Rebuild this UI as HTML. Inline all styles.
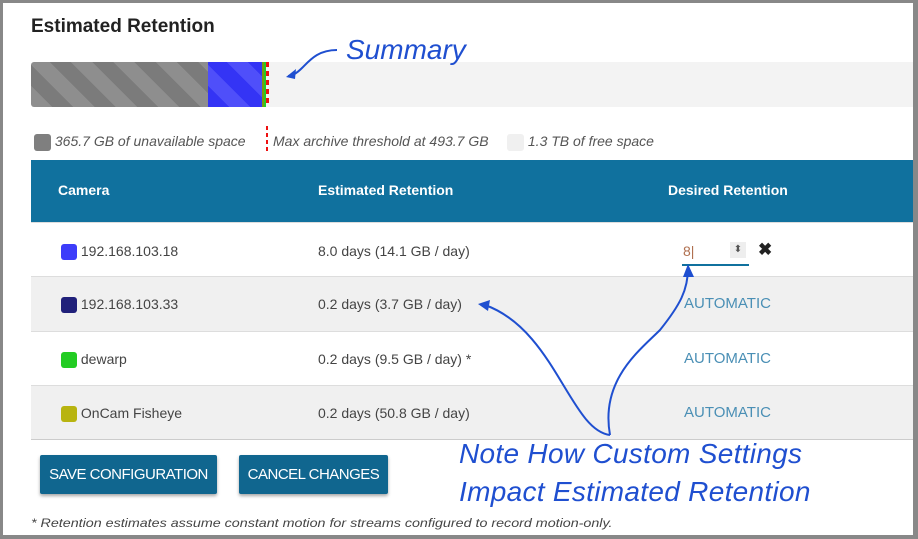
<!DOCTYPE html>
<html><head><style>
body{margin:0;width:918px;height:539px;background:#888;position:relative;overflow:hidden;font-family:"Liberation Sans",sans-serif;}
.page{position:absolute;left:3px;top:3px;width:910px;height:532px;background:#fff;}
.a{position:absolute;}
.title{left:31px;top:16px;font-size:19px;font-weight:bold;color:#222;}
.bar{left:31px;top:62px;width:882px;height:45px;background:#f3f3f3;border-radius:3px 0 0 3px;overflow:hidden;}
.leg{top:133px;font-size:14px;font-style:italic;color:#555;}
.sw{display:inline-block;width:17px;height:17px;border-radius:3px;vertical-align:middle;}
.hdr{left:31px;top:160px;width:882px;height:62px;background:#10719e;color:#fff;font-weight:bold;font-size:14px;}
.row{left:31px;width:882px;border-top:1px solid #ddd;font-size:14px;color:#444;}
.auto{color:#4a8fb5;font-size:15px;}
.btn{top:455px;height:39px;background:#10668f;color:#fff;font-size:15px;line-height:39px;text-align:center;border-radius:2px;box-shadow:0 2px 3px rgba(0,0,0,.35);letter-spacing:-0.5px}
.note{color:#1f4fd0;font-size:28px;font-style:italic;font-family:"Liberation Sans",sans-serif;}
</style></head><body>
<div class="page"></div>
<div class="a title">Estimated Retention</div>
<div class="a bar">
<div class="a" style="left:0;top:0;width:177px;height:45px;background:repeating-linear-gradient(45deg,#8e8e8e 0 15px,#7b7b7b 15px 30px)"></div>
<div class="a" style="left:177px;top:0;width:54px;height:45px;background:repeating-linear-gradient(45deg,#3434f5 0 15px,#4f4ffa 15px 30px)"></div>
<div class="a" style="left:231px;top:0;width:2px;height:45px;background:#7a9a10"></div>
<div class="a" style="left:233px;top:0;width:2px;height:45px;background:#2c2"></div>
<div class="a" style="left:235px;top:0;width:3px;height:45px;background:repeating-linear-gradient(#e11 0 5px,transparent 5px 9px)"></div>
</div>
<div class="a leg" style="left:34px"><span class="sw" style="background:#7f7f7f"></span> 365.7 GB of unavailable space</div>
<div class="a" style="left:266px;top:126px;width:2px;height:26px;background:repeating-linear-gradient(#e11 0 4px,transparent 4px 7px)"></div>
<div class="a leg" style="left:273px">Max archive threshold at 493.7 GB</div>
<div class="a leg" style="left:507px"><span class="sw" style="background:#f0f0f0"></span> 1.3 TB of free space</div>
<div class="a hdr"><span class="a" style="left:27px;top:22px">Camera</span><span class="a" style="left:287px;top:22px">Estimated Retention</span><span class="a" style="left:637px;top:22px">Desired Retention</span></div>
<div class="a row" style="top:222px;height:54px;background:#fff">
<span class="a" style="left:30px;top:20px"><span class="sw" style="background:#3d3dfa;width:16px;height:16px"></span> 192.168.103.18</span>
<span class="a" style="left:287px;top:20px">8.0 days (14.1 GB / day)</span>
<span class="a" style="left:652px;top:20px;color:#b07050">8|</span>
<div class="a" style="left:699px;top:19px;width:16px;height:16px;background:#eee;font-size:10px;text-align:center;color:#555;line-height:16px">⬍</div>
<div class="a" style="left:651px;top:41px;width:67px;height:2px;background:#10719e"></div>
<span class="a" style="left:727px;top:17px;font-size:17px;font-weight:bold;color:#222">✖</span>
</div>
<div class="a row" style="top:276px;height:54px;background:#f0f0f0">
<span class="a" style="left:30px;top:19px"><span class="sw" style="background:#20207a;width:16px;height:16px"></span> 192.168.103.33</span>
<span class="a" style="left:287px;top:19px">0.2 days (3.7 GB / day)</span>
<span class="a auto" style="left:653px;top:18px">AUTOMATIC</span></div>
<div class="a row" style="top:331px;height:54px;background:#fff">
<span class="a" style="left:30px;top:19px"><span class="sw" style="background:#2c2;width:16px;height:16px"></span> dewarp</span>
<span class="a" style="left:287px;top:19px">0.2 days (9.5 GB / day) *</span>
<span class="a auto" style="left:653px;top:18px">AUTOMATIC</span></div>
<div class="a row" style="top:385px;height:53px;background:#f0f0f0;border-bottom:1px solid #ccc">
<span class="a" style="left:30px;top:19px"><span class="sw" style="background:#b8b410;width:16px;height:16px"></span> OnCam Fisheye</span>
<span class="a" style="left:287px;top:19px">0.2 days (50.8 GB / day)</span>
<span class="a auto" style="left:653px;top:18px">AUTOMATIC</span></div>
<div class="a btn" style="left:40px;width:177px">SAVE CONFIGURATION</div>
<div class="a btn" style="left:239px;width:149px">CANCEL CHANGES</div>
<div class="a" style="left:31px;top:516px;font-size:12px;font-style:italic;color:#444;transform:scaleX(1.19);transform-origin:0 0;white-space:nowrap">* Retention estimates assume constant motion for streams configured to record motion-only.</div>
<div class="a note" style="left:346px;top:34px">Summary</div>
<div class="a note" style="left:459px;top:438px;letter-spacing:0.3px">Note How Custom Settings</div>
<div class="a note" style="left:459px;top:476px;letter-spacing:0.3px">Impact Estimated Retention</div>
<svg class="a" style="left:0;top:0" width="918" height="539">
<g fill="none" stroke="#1f4fd0" stroke-width="2">
<path d="M337 50 C318 50 310 60 302 68 C296 74 292 76 288 76"/>
<path d="M610 435 C570 430 555 330 485 305"/>
<path d="M610 435 C600 380 640 350 660 330 C680 305 688 290 688 268"/>
</g>
<g fill="#1f4fd0"><path d="M286 77 L296 69 L295 79 Z"/><path d="M478 304 L490 300 L488 311 Z"/><path d="M688 264 L683 277 L694 277 Z"/></g>
</svg>
</body></html>
